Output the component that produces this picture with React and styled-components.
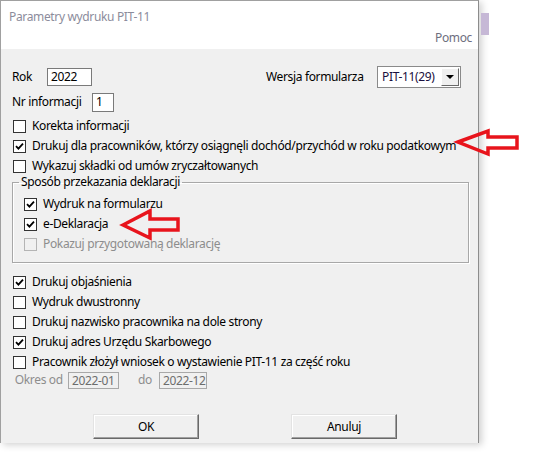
import React from 'react';
import styled, { createGlobalStyle } from 'styled-components';

const GlobalStyle = createGlobalStyle`
  html, body {
    margin: 0;
    padding: 0;
    background: #ffffff;
  }
  body {
    font-family: 'Noto Sans', 'Open Sans', sans-serif;
    font-size: 12px;
    letter-spacing: -0.35px;
    color: #000;
  }
`;

const Page = styled.div`
  position: relative;
  width: 544px;
  height: 459px;
  display: flex;
  align-items: flex-start;
  overflow: hidden;
`;

const Dialog = styled.div`
  width: 477px;
  height: 442px;
  border-top: 1px solid #a0a0a0;
  border-left: 1px solid #a0a0a0;
  border-right: 1px solid #8c8c8c;
  background: #f0f0f0;
  box-shadow: 3px 2px 7px rgba(0, 0, 0, 0.18);
  display: flex;
  flex-direction: column;
`;

const TitleBar = styled.div`
  height: 48px;
  box-sizing: border-box;
  background: #fff;
  padding: 8px 6px 3px 8px;
  display: flex;
  flex-direction: column;
  justify-content: space-between;
`;

const Title = styled.div`
  color: #8c8c9c;
  line-height: 16px;
`;

const Help = styled.div`
  align-self: flex-end;
  color: #6e6e7e;
  line-height: 16px;
`;

const Body = styled.div`
  padding: 16px 0 0 11px;
  display: flex;
  flex-direction: column;
`;

const Row = styled.div`
  display: flex;
  align-items: center;
  height: ${({ $h }) => $h || 20}px;
  margin-top: ${({ $mt }) => $mt || 0}px;
`;

const Label = styled.div`
  width: ${({ $w }) => ($w ? `${$w}px` : 'auto')};
  flex-shrink: 0;
  color: ${({ $disabled }) => ($disabled ? '#8d8d8d' : '#000')};
  white-space: nowrap;
  line-height: 16px;
`;

const Field = styled.div`
  box-sizing: border-box;
  flex-shrink: 0;
  width: ${({ $w }) => $w}px;
  height: ${({ $h }) => $h || 18}px;
  border: 1px solid ${({ $disabled }) => ($disabled ? '#a8a8a8' : '#7a7a7a')};
  background: ${({ $disabled }) => ($disabled ? '#f0f0f0' : '#fff')};
  color: ${({ $disabled }) => ($disabled ? '#6d6d6d' : '#000')};
  padding: 0 3px;
  line-height: 16px;
  white-space: nowrap;
  overflow: hidden;
  margin-right: ${({ $mr }) => $mr || 0}px;
`;

const Select = styled.div`
  box-sizing: border-box;
  width: 84px;
  height: 22px;
  border: 1px solid #8a8a8a;
  background: #fff;
  display: flex;
  align-items: stretch;
  padding: 1px;
`;

const SelectValue = styled.div`
  flex: 1;
  padding-left: 3px;
  line-height: 18px;
  color: #1a1040;
`;

const SelectButton = styled.div`
  box-sizing: border-box;
  width: 18px;
  background: #f0f0f0;
  border-top: 1px solid #fff;
  border-left: 1px solid #fff;
  border-right: 1px solid #696969;
  border-bottom: 1px solid #696969;
  display: flex;
  align-items: center;
  justify-content: center;

  &:after {
    content: '';
    border-left: 4px solid transparent;
    border-right: 4px solid transparent;
    border-top: 4px solid #000;
  }
`;

const CheckList = styled.div`
  margin-top: ${({ $mt }) => $mt || 0}px;
`;

const CheckRow = styled.div`
  display: flex;
  align-items: center;
  height: 20px;
`;

const Box = styled.div`
  box-sizing: border-box;
  width: 13px;
  height: 13px;
  margin: 0 6px 0 1px;
  border: 1px solid ${({ $disabled }) => ($disabled ? '#b4b4b4' : '#333')};
  background: ${({ $disabled }) => ($disabled ? '#f0f0f0' : '#fff')};
  display: flex;
  align-items: center;
  justify-content: center;
`;

const Group = styled.fieldset`
  box-sizing: border-box;
  width: 457px;
  margin: -2px 0 0 0;
  padding: 4px 0 8px 10px;
  border: 1px solid #a8a8a8;
  box-shadow: 1px 1px 0 #fff, inset 1px 1px 0 #fff;
`;

const Legend = styled.legend`
  padding: 0 2px;
  margin-left: -4px;
  line-height: 16px;
`;

const Buttons = styled.div`
  display: flex;
  gap: 92px;
  padding-left: 81px;
  margin-top: 25px;
`;

const Button = styled.div`
  box-sizing: border-box;
  width: 106px;
  height: 25px;
  background: #f0f0f0;
  border-top: 1px solid #e3e3e3;
  border-left: 1px solid #e3e3e3;
  border-right: 1px solid #696969;
  border-bottom: 1px solid #696969;
  box-shadow: inset -1px -1px 0 #a0a0a0, inset 1px 1px 0 #fff;
  display: flex;
  align-items: center;
  justify-content: center;
`;

const Side = styled.div`
  flex: 1;
  padding-top: 13px;
`;

const Strip = styled.div`
  width: 8px;
  height: 22px;
  margin-left: 2px;
  background: #c6b8d6;
`;

const Overlay = styled.svg`
  position: absolute;
  left: 0;
  top: 0;
  pointer-events: none;
`;

const Check = () => (
  <svg width="9" height="9" viewBox="0 0 9 9">
    <path d="M1 4.2 L3.4 6.6 L8 1.6" fill="none" stroke="#000" strokeWidth="1.8" />
  </svg>
);

const CheckBox = ({ checked, disabled, children }) => (
  <CheckRow>
    <Box $disabled={disabled}>{checked && <Check />}</Box>
    <Label $disabled={disabled}>{children}</Label>
  </CheckRow>
);

const App = () => (
  <>
    <GlobalStyle />
    <Page>
      <Dialog>
        <TitleBar>
          <Title>Parametry wydruku PIT-11</Title>
          <Help>Pomoc</Help>
        </TitleBar>
        <Body>
          <Row $h={23}>
            <Label $w={35}>Rok</Label>
            <Field $w={45}>2022</Field>
            <Label $w={174} />
            <Label $w={111}>Wersja formularza</Label>
            <Select>
              <SelectValue>PIT-11(29)</SelectValue>
              <SelectButton />
            </Select>
          </Row>
          <Row $mt={4}>
            <Label $w={80}>Nr informacji</Label>
            <Field $w={22} $h={19}>1</Field>
          </Row>
          <CheckList $mt={4}>
            <CheckBox>Korekta informacji</CheckBox>
            <CheckBox checked>
              Drukuj dla pracowników, którzy osiągnęli dochód/przychód w roku podatkowym
            </CheckBox>
            <CheckBox>Wykazuj składki od umów zryczałtowanych</CheckBox>
          </CheckList>
          <Group>
            <Legend>Sposób przekazania deklaracji</Legend>
            <CheckBox checked>Wydruk na formularzu</CheckBox>
            <CheckBox checked>e-Deklaracja</CheckBox>
            <CheckBox disabled>Pokazuj przygotowaną deklarację</CheckBox>
          </Group>
          <CheckList $mt={9}>
            <CheckBox checked>Drukuj objaśnienia</CheckBox>
            <CheckBox>Wydruk dwustronny</CheckBox>
            <CheckBox>Drukuj nazwisko pracownika na dole strony</CheckBox>
            <CheckBox checked>Drukuj adres Urzędu Skarbowego</CheckBox>
            <CheckBox>Pracownik złożył wniosek o wystawienie PIT-11 za część roku</CheckBox>
          </CheckList>
          <Row $h={18} $mt={-1}>
            <Label $w={56} $disabled>
              &nbsp;Okres od
            </Label>
            <Field $w={51} $h={17} $disabled $mr={19}>
              2022-01
            </Field>
            <Label $w={21} $disabled>
              do
            </Label>
            <Field $w={48} $h={17} $disabled>
              2022-12
            </Field>
          </Row>
          <Buttons>
            <Button>OK</Button>
            <Button>Anuluj</Button>
          </Buttons>
        </Body>
      </Dialog>
      <Side>
        <Strip />
      </Side>
      <Overlay width="544" height="459" viewBox="0 0 544 459">
        <polygon
          points="458,142 488,131 488,137 517,137 517,148 488,148 488,154"
          fill="none"
          stroke="#e8141c"
          strokeWidth="3.5"
        />
        <polygon
          points="123,225 150,211 150,219 178,219 178,230 150,230 150,238"
          fill="none"
          stroke="#e8141c"
          strokeWidth="3.5"
        />
      </Overlay>
    </Page>
  </>
);

export default App;
